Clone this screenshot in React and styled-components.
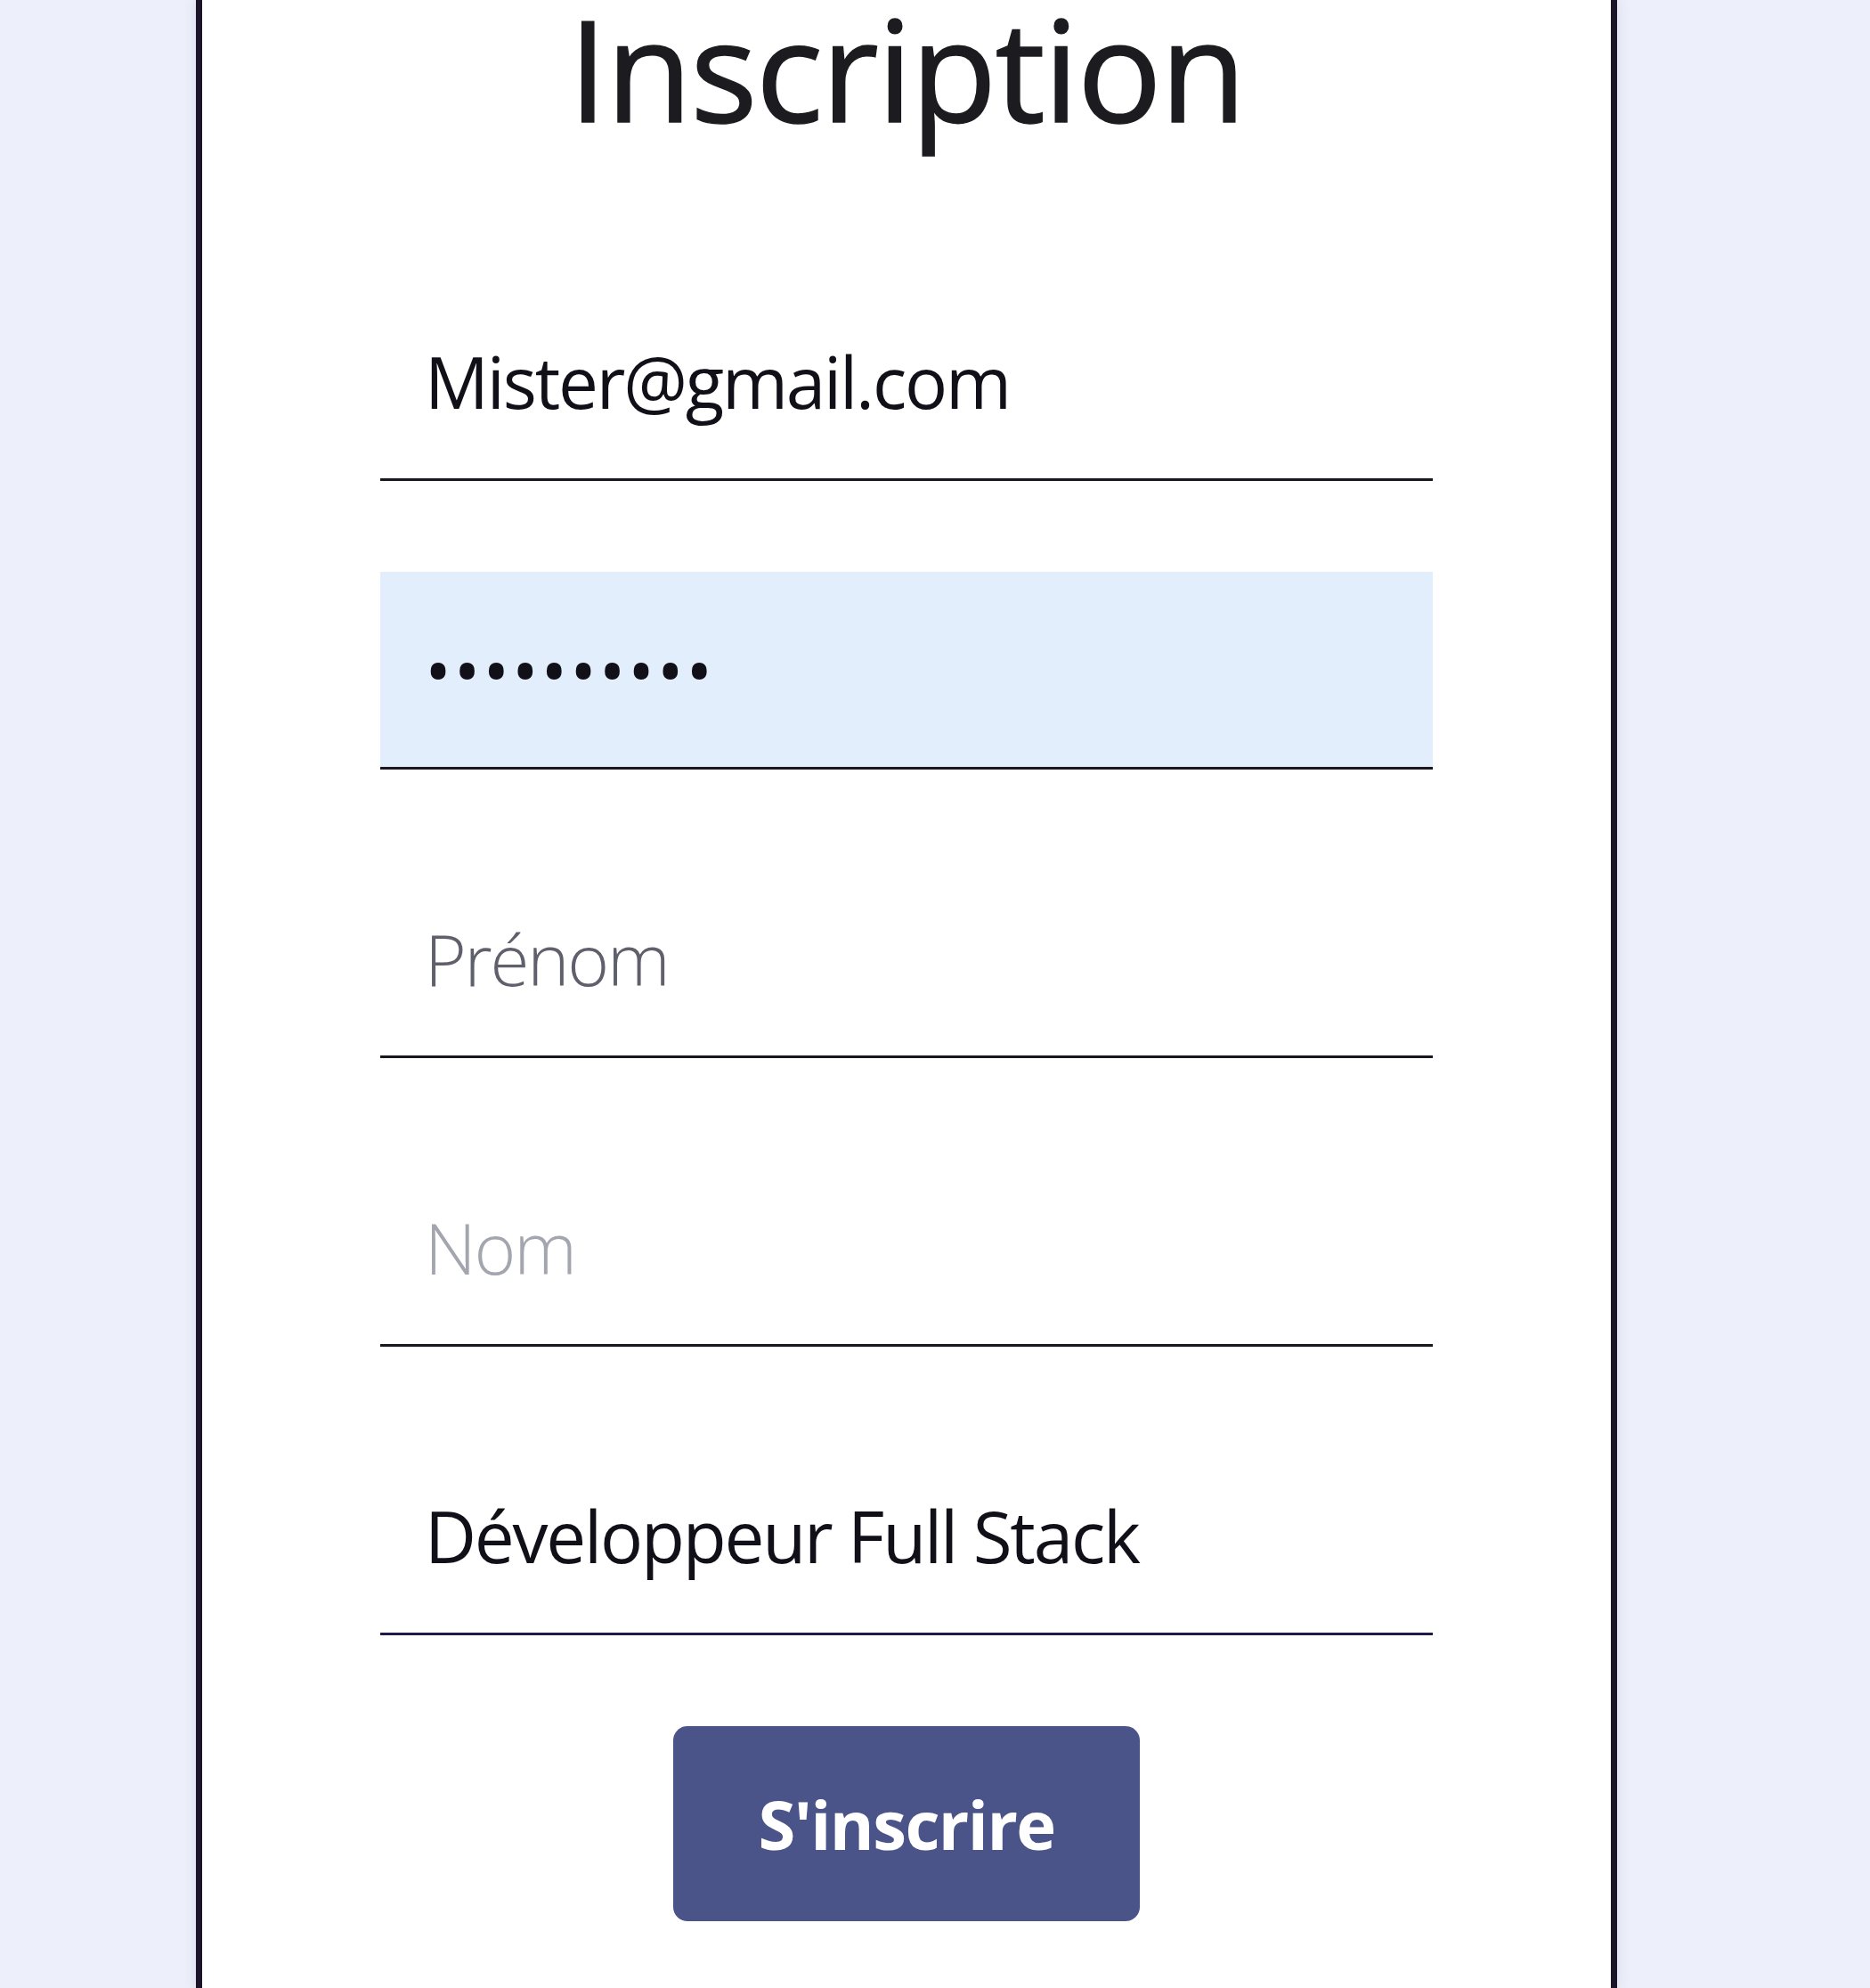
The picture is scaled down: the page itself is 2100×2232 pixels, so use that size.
import React, { useState } from "react"
import styled, { createGlobalStyle } from "styled-components"

const GlobalStyle = createGlobalStyle`
	body {
		margin: 0;
		background: #edf0fa;
		font-family: "Open Sans", "Noto Sans", sans-serif;
	}
`

const Page = styled.div`
	min-height: 2232px;
	padding-left: 220px;
	display: flex;
`

const Card = styled.div`
	box-sizing: border-box;
	width: 1596px;
	min-height: 2232px;
	background: #ffffff;
	border-left: 7px solid #1c1428;
	border-right: 7px solid #1c1428;
	box-shadow: 0 0 14px rgba(60, 60, 120, 0.12);
	padding: 0 200px;
	display: flex;
	flex-direction: column;
`

const Title = styled.h1`
	margin: -3px 0 0;
	font-size: 158px;
	line-height: 1;
	font-weight: 400;
	color: #1c1c20;
	text-align: center;
	letter-spacing: -2px;
	-webkit-text-stroke: 1.5px #1c1c20;
`

const Form = styled.form`
	margin-top: 163px;
	display: flex;
	flex-direction: column;
	gap: 102px;
`

const Input = styled.input`
	box-sizing: border-box;
	width: 100%;
	height: 222px;
	padding: 0 0 0 50px;
	border: none;
	border-bottom: 3px solid ${(p) => (p.$active ? "#1d1a4c" : "#1a1620")};
	background: ${(p) => (p.$filled ? "#e2eefc" : "#ffffff")};
	font-family: "Open Sans", "Noto Sans", sans-serif;
	font-size: 80px;
	letter-spacing: ${(p) => (p.type === "password" ? "2.5px" : "-2.2px")};
	color: #111018;
	outline: none;
	caret-color: #111018;

	&::placeholder {
		color: ${(p) => p.$hint || "#8a8d96"};
		font-weight: 300;
	}
`

const Button = styled.button`
	align-self: center;
	width: 524px;
	height: 219px;
	border: none;
	border-radius: 16px;
	background: #4b5489;
	color: #ffffff;
	font-family: "Open Sans", "Noto Sans", sans-serif;
	font-weight: 700;
	font-size: 76px;
	letter-spacing: -1.6px;
	cursor: pointer;
`

export default function App() {
	const [values, setValues] = useState({
		email: "Mister@gmail.com",
		password: "motdepasse",
		firstName: "",
		lastName: "",
		job: "Développeur Full Stack",
	})

	const update = (key) => (e) => setValues({ ...values, [key]: e.target.value })

	return (
		<Page>
			<GlobalStyle />
			<Card>
				<Title>Inscription</Title>
				<Form onSubmit={(e) => e.preventDefault()}>
					<Input type="email" value={values.email} onChange={update("email")} />
					<Input type="password" $filled value={values.password} onChange={update("password")} />
					<Input placeholder="Prénom" $hint="#5f606c" value={values.firstName} onChange={update("firstName")} />
					<Input placeholder="Nom" $hint="#a3a6ae" value={values.lastName} onChange={update("lastName")} />
					<Input autoFocus $active value={values.job} onChange={update("job")} />
					<Button type="submit">S'inscrire</Button>
				</Form>
			</Card>
		</Page>
	)
}
